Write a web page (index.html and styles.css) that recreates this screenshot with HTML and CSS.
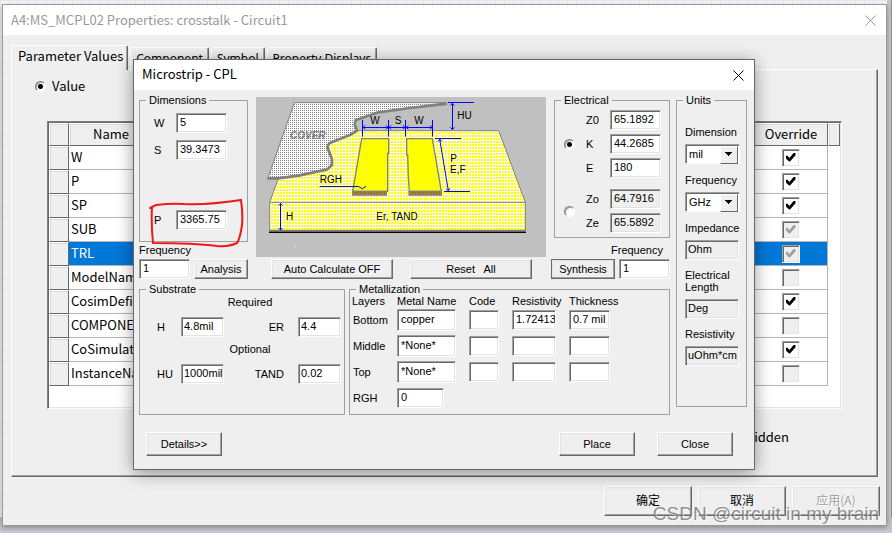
FILE: index.html
```html
<!DOCTYPE html>
<html lang="en">
<head>
<meta charset="utf-8">
<title>Microstrip - CPL</title>
<link rel="stylesheet" href="styles.css">
</head>
<body>
<div class="desktop">
  <section class="window">
    <header class="titlebar titlebar-idle">
      <h1>A4:MS_MCPL02 Properties: crosstalk - Circuit1</h1>
      <button class="close" aria-label="Close properties"><svg viewBox="0 0 11 11"><path d="M0.5 0.5 10.5 10.5M10.5 0.5 0.5 10.5"/></svg></button>
    </header>
    <div class="tabs" role="tablist">
      <button class="tab tab-on" role="tab">Parameter Values</button>
      <button class="tab" role="tab">Component</button>
      <button class="tab" role="tab">Symbol</button>
      <button class="tab" role="tab">Property Displays</button>
    </div>
    <div class="panel">
      <label class="mode"><input type="radio" name="mode" checked>Value</label>
      <div class="listbox">
        <table class="params">
          <colgroup><col class="c-handle"><col><col class="c-check"><col class="c-end"></colgroup>
          <thead><tr><th></th><th class="h-name">Name</th><th>Override</th><th></th></tr></thead>
          <tbody>
            <tr><th></th><td>W</td><td><input type="checkbox" aria-label="Override W" checked></td><td></td></tr>
            <tr><th></th><td>P</td><td><input type="checkbox" aria-label="Override P" checked></td><td></td></tr>
            <tr><th></th><td>SP</td><td><input type="checkbox" aria-label="Override SP" checked></td><td></td></tr>
            <tr><th></th><td>SUB</td><td><input type="checkbox" aria-label="Override SUB" checked disabled></td><td></td></tr>
            <tr class="selected"><th></th><td>TRL</td><td><input type="checkbox" aria-label="Override TRL" checked disabled></td><td></td></tr>
            <tr><th></th><td>ModelName</td><td><input type="checkbox" aria-label="Override ModelName" disabled></td><td></td></tr>
            <tr><th></th><td>CosimDefinition</td><td><input type="checkbox" aria-label="Override CosimDefinition" checked></td><td></td></tr>
            <tr><th></th><td>COMPONENT</td><td><input type="checkbox" aria-label="Override COMPONENT" disabled></td><td></td></tr>
            <tr><th></th><td>CoSimulator</td><td><input type="checkbox" aria-label="Override CoSimulator" checked></td><td></td></tr>
            <tr><th></th><td>InstanceName</td><td><input type="checkbox" aria-label="Override InstanceName" disabled></td><td></td></tr>
          </tbody>
        </table>
      </div>
      <p class="hidden-note">Hidden</p>
    </div>
    <footer class="actions">
      <button class="btn">确定</button>
      <button class="btn">取消</button>
      <button class="btn" disabled>应用(A)</button>
    </footer>
  </section>

  <section class="dialog">
    <header class="titlebar">
      <h2>Microstrip - CPL</h2>
      <button class="close" aria-label="Close dialog"><svg viewBox="0 0 11 11"><path d="M0.5 0.5 10.5 10.5M10.5 0.5 0.5 10.5"/></svg></button>
    </header>
    <div class="body">
      <div class="work">
        <div class="upper">
          <div class="col-dim">
            <fieldset class="dims">
              <legend>Dimensions</legend>
              <label for="w">W</label><input id="w" type="text" value="5">
              <label for="s">S</label><input id="s" type="text" value="39.3473">
              <label for="p">P</label><input id="p" type="text" value="3365.75">
            </fieldset>
            <label class="freq-label" for="fa">Frequency</label>
            <div class="pair"><input id="fa" type="text" value="1"><button class="btn">Analysis</button></div>
          </div>
          <div class="col-pic">
            <svg class="drawing" viewBox="18 21 870 480" role="img" aria-label="Coupled line cross section">
              <defs>
                <pattern id="sub" width="9" height="9" patternUnits="userSpaceOnUse"><rect width="9" height="9" fill="#fff"/><path fill="#ff0" d="M0 0h6v6h-6z" shape-rendering="crispEdges"/></pattern>
                <pattern id="cov" width="6" height="6" patternUnits="userSpaceOnUse"><rect width="6" height="6" fill="#fff"/><path fill="#808080" d="M0 0h3v3h-3z" shape-rendering="crispEdges"/></pattern>
              </defs>
              <rect x="18" y="21" width="870" height="480" fill="#c0c0c0"/>
              <path d="M150 122H746L826 337V424H59V337L85 265Z" fill="url(#sub)" stroke="#808080" stroke-width="3"/>
              <path d="M59 337H826" stroke="#808080" stroke-width="3"/>
              <path d="M58 422H827" stroke="#808080" stroke-width="5"/><path d="M57 427H828" stroke="#000" stroke-width="4"/>
              <path d="M133 38H590V44L480 54L385 67L314 92L319 119L299 134L238 160L232 178L246 210V227L232 238L85 266H53Z" fill="url(#cov)" stroke="#808080" stroke-width="3"/>
              <path d="M588 41 480 54 385 67 316 91 314 104 321 122 300 135 238 160 232 170 246 208V225L232 238 150 256 85 265H53" fill="none" stroke="#808080" stroke-width="8" stroke-linejoin="round"/>
              <path d="M335 146H416V190H413V304H308Z M470 146H547L574 304H478L475 262L473 195H470Z" fill="#ff0" stroke="#808080" stroke-width="4"/>
              <path d="M306 310H411M475 310H576" stroke="#808080" stroke-width="15"/>
              <path d="M310 310H408M479 310H573" stroke="#800000" stroke-width="3"/><path d="M310 310H408M479 310H573" stroke="#ff0" stroke-width="3" stroke-dasharray="3 3"/>
              <g fill="none" stroke="#00f" stroke-width="3">
                <path d="M337.500 90V140M415.500 90V140M466.500 90V140M547.500 90V140M337 112.500H548M345 106 339 112 345 118M408 106 414 112 408 118M423 106 417 112 423 118M459 106 465 112 459 118M475 106 469 112 475 118M540 106 546 112 540 118"/>
                <path d="M594 37.500H672M607.500 38V120M601 46 607 40 613 46M601 112 607 118 613 112M555 145.500H633M582 304.500H660M569 147 595 302M564 155 569 148 576 154M589 297 595 302 600 295M91.500 340V420M86 347 92 341 98 347M86 414 92 420 98 414M209 289.500H325L337 296 348 289"/>
              </g>
              <g class="draw-text">
                <text x="361" y="101">W</text><text x="434" y="101">S</text><text x="493" y="101">W</text><text x="622" y="88">HU</text>
                <text x="601" y="215">P</text><text x="600" y="249">E,F</text><text x="209" y="278">RGH</text><text x="108" y="389">H</text><text x="379" y="389">Er, TAND</text>
                <text class="cover" x="120" y="148">COVER</text>
              </g>
              <rect x="135" y="468" width="3" height="3" fill="#fff"/>
            </svg>
            <div class="pic-actions"><button class="btn">Auto Calculate OFF</button><button class="btn">Reset&nbsp;&nbsp; All</button></div>
          </div>
          <div class="col-el">
            <fieldset class="elec">
              <legend>Electrical</legend>
              <div class="elec-set">
                <input type="radio" name="el" aria-label="Z0, K, E" checked>
                <div class="rows">
                  <label for="z0">Z0</label><input id="z0" type="text" value="65.1892">
                  <label for="k">K</label><input id="k" type="text" value="44.2685">
                  <label for="e">E</label><input id="e" type="text" value="180">
                </div>
              </div>
              <div class="elec-set">
                <input type="radio" name="el" aria-label="Zo, Ze">
                <div class="rows">
                  <label for="zo">Zo</label><input id="zo" type="text" value="64.7916" readonly>
                  <label for="ze">Ze</label><input id="ze" type="text" value="65.5892" readonly>
                </div>
              </div>
            </fieldset>
            <label class="freq-label freq-right" for="fs">Frequency</label>
            <div class="pair"><button class="btn btn-default">Synthesis</button><input id="fs" type="text" value="1"></div>
          </div>
        </div>
        <div class="lower">
          <fieldset class="substrate">
            <legend>Substrate</legend>
            <p>Required</p>
            <div class="sub-row"><label for="h">H</label><input id="h" type="text" value="4.8mil"><label for="er">ER</label><input id="er" type="text" value="4.4"></div>
            <p>Optional</p>
            <div class="sub-row"><label for="hu">HU</label><input id="hu" type="text" value="1000mil"><label for="tand">TAND</label><input id="tand" type="text" value="0.02"></div>
          </fieldset>
          <fieldset class="metal">
            <legend>Metallization</legend>
            <table>
              <thead><tr><th>Layers</th><th>Metal Name</th><th>Code</th><th>Resistivity</th><th>Thickness</th></tr></thead>
              <tbody>
                <tr><th>Bottom</th><td><input class="m-name" type="text" aria-label="Bottom metal" value="copper"></td><td><input class="m-code" type="text" aria-label="Bottom code"></td><td><input class="m-res" type="text" aria-label="Bottom resistivity" value="1.72413"></td><td><input class="m-thick" type="text" aria-label="Bottom thickness" value="0.7 mil"></td></tr>
                <tr><th>Middle</th><td><input class="m-name" type="text" aria-label="Middle metal" value="*None*"></td><td><input class="m-code" type="text" aria-label="Middle code"></td><td><input class="m-res" type="text" aria-label="Middle resistivity"></td><td><input class="m-thick" type="text" aria-label="Middle thickness"></td></tr>
                <tr><th>Top</th><td><input class="m-name" type="text" aria-label="Top metal" value="*None*"></td><td><input class="m-code" type="text" aria-label="Top code"></td><td><input class="m-res" type="text" aria-label="Top resistivity"></td><td><input class="m-thick" type="text" aria-label="Top thickness"></td></tr>
                <tr><th>RGH</th><td><input class="m-rgh" type="text" aria-label="RGH" value="0"></td><td></td><td></td><td></td></tr>
              </tbody>
            </table>
          </fieldset>
        </div>
      </div>
      <fieldset class="units">
        <legend>Units</legend>
        <label for="ud">Dimension</label><span class="drop"><select id="ud"><option>mil</option></select></span>
        <label for="uf">Frequency</label><span class="drop"><select id="uf"><option>GHz</option></select></span>
        <label for="ui">Impedance</label><input id="ui" type="text" value="Ohm" readonly>
        <label for="ue">Electrical<br>Length</label><input id="ue" type="text" value="Deg" readonly>
        <label for="ur">Resistivity</label><input id="ur" type="text" value="uOhm*cm" readonly>
      </fieldset>
    </div>
    <footer class="dialog-actions">
      <button class="btn">Details&gt;&gt;</button>
      <button class="btn push">Place</button>
      <button class="btn">Close</button>
    </footer>
    <svg class="markup" viewBox="0 0 96 50" aria-hidden="true"><path d="M1 9 7 6Q24 4 35 5Q60 6 92 1Q94 15 93 26Q91 40 88 44Q80 48 68 47Q45 44 4 44Q2 24 3 8"/></svg>
  </section>
  <div class="watermark">CSDN @circuit in my brain</div>
</div>
</body>
</html>
```
FILE: styles.css
```css
* { box-sizing: border-box; }
body { margin: 0; }
button, input, select { font: inherit; color: inherit; margin: 0; }
h1, h2, p { margin: 0; font-weight: normal; }

.desktop {
  position: relative;
  min-height: 100vh;
  padding: 4px 5px 7px 2px;
  overflow: hidden;
  font: 13px/16px "Noto Sans CJK SC", "Noto Sans", sans-serif;
  color: #000;
  background:
    linear-gradient(#b9bec6, #c9ccd2) bottom / 100% 16px no-repeat,
    linear-gradient(90deg, #c4c4c4 0 4px, #8c8c8c 4px 5px) right / 5px 100% no-repeat,
    repeating-linear-gradient(90deg, #e4e4f4 0 1px, transparent 1px 9px),
    repeating-linear-gradient(#e4e4f4 0 1px, transparent 1px 9px),
    #f7f7f7;
}
.window {
  display: flex;
  flex-direction: column;
  min-height: calc(100vh - 11px);
  border: 1px solid #999;
  background: #efefef;
  box-shadow: 0 2px 5px rgba(0, 0, 0, .3);
}
.titlebar {
  display: flex;
  align-items: center;
  justify-content: space-between;
  height: 30px;
  padding: 0 10px 0 8px;
  background: #fff;
}
.titlebar h1, .titlebar h2 { font-size: 13px; }
.titlebar h2 { padding-bottom: 2px; }
.titlebar-idle { color: #999; }
.close { width: 11px; height: 11px; padding: 0; border: 0; background: none; display: flex; }
.close svg { width: 11px; height: 11px; fill: none; stroke: currentColor; }

.tabs {
  display: flex;
  align-items: flex-end;
  gap: 2px;
  margin: 10px 8px 0;
  height: 24px;
  font: 12px/16px "Noto Sans", sans-serif;
}
.tab {
  height: 22px;
  padding: 1px 5px;
  border: 1px solid;
  border-color: #fff #696969 transparent #fff;
  border-bottom: 0;
  border-radius: 2px 2px 0 0;
  background: #efefef;
  box-shadow: inset -1px 0 #a0a0a0;
}
.tab-on {
  position: relative;
  height: 25px;
  margin-bottom: -1px;
  padding: 0 4px 4px 6px;
  font: 13px/16px "Noto Sans CJK SC", "Noto Sans", sans-serif;
}
.panel {
  flex: 1;
  margin: 0 8px;
  padding: 8px 35px 0 35px;
  border: 1px solid;
  border-color: #fff #696969 #696969 #fff;
  box-shadow: inset -1px -1px #a0a0a0;
}
.mode { display: flex; align-items: center; gap: 6px; margin-left: -12px; height: 16px; }
input[type="radio"] {
  appearance: none;
  width: 11px;
  height: 11px;
  border: 1px solid;
  border-color: #808080 #fff #fff #808080;
  border-radius: 50%;
  background: #fff;
  box-shadow: inset 1px 1px #a0a0a0;
}
input[type="radio"]:checked { background: radial-gradient(circle, #000 0 2px, #fff 3px); }

.listbox {
  height: 288px;
  margin-top: 27px;
  border: 1px solid;
  border-color: #808080 #fff #fff #808080;
  background: #fff;
  box-shadow: inset 1px 1px #696969, inset -1px -1px #e3e3e3;
  padding: 1px;
}
.params { width: 100%; border-collapse: separate; border-spacing: 0; table-layout: fixed; text-align: left; }
.c-handle { width: 20px; }
.c-check { width: 74px; }
.c-end { width: 12px; }
.params th {
  padding: 0;
  background: #efefef;
  border: 1px solid;
  border-color: #fff #696969 #696969 #fff;
  box-shadow: inset 1px 1px #dcdcdc;
  font-weight: normal;
}
.params thead th { height: 23px; padding-bottom: 2px; text-align: center; }
.params thead .h-name { text-align: left; padding-left: 23px; }
.params td { height: 24px; padding: 0 2px 2px; border-bottom: 1px solid #b4b4b4; line-height: 16px; }
.params td:nth-child(3) { border-right: 1px solid #b4b4b4; padding-bottom: 0; }
.params td:last-child { border: 0; }
.selected td { background: #0078d7; color: #fff; }
.selected td:last-child { background: none; }
.params input {
  display: block;
  appearance: none;
  width: 18px;
  height: 18px;
  margin: 0 auto;
  border: 1px solid;
  border-color: #a0a0a0 #fff #fff #a0a0a0;
  background: #fff;
  box-shadow: inset 1px 1px #696969, inset -1px -1px #e3e3e3;
}
.params input:disabled { background: #efefef; }
.params input:checked::before {
  content: "";
  display: block;
  width: 10px;
  height: 9px;
  margin: 3px;
  background: #000;
  clip-path: polygon(0 35%, 20% 35%, 40% 60%, 80% 5%, 100% 0, 100% 30%, 45% 100%, 35% 100%, 0 60%);
}
.params input:checked:disabled::before { background: #a0a0a0; }
.hidden-note { margin-top: 20px; padding-right: 53px; text-align: right; }
.actions { display: flex; justify-content: flex-end; gap: 6px; padding: 9px 6px 9px; }
.btn {
  padding: 0;
  border: 1px solid;
  border-color: #fff #696969 #696969 #fff;
  background: #efefef;
  box-shadow: inset -1px -1px #a0a0a0, inset 1px 1px #e3e3e3;
}
.actions .btn { width: 88px; height: 30px; padding-bottom: 2px; font-size: 12px; }
.actions .btn:disabled { color: #a0a0a0; text-shadow: 1px 1px #fff; }

.dialog {
  position: absolute;
  left: 133px;
  top: 59px;
  width: 622px;
  border: 1px solid #666;
  background: #efefef;
  box-shadow: 0 3px 16px rgba(0, 0, 0, .4);
}
.body { display: flex; gap: 6px; padding: 4px 7px 0 5px; font: 11px/12px "Liberation Sans", sans-serif; }
.work { flex: 1; }
.upper { display: flex; height: 189px; }
fieldset { margin: 0; min-width: 0; padding: 0; border: 1px solid #a0a0a0; }
legend { margin-left: 6px; padding: 0 3px; line-height: 12px; }
.body input[type="text"] {
  width: 51px;
  height: 20px;
  padding: 0 0 2px 3px;
  border: 1px solid;
  border-color: #a0a0a0 #fff #fff #a0a0a0;
  background: #fff;
  box-shadow: inset 1px 1px #696969, inset -1px -1px #e3e3e3;
}
.body input[type="text"]:read-only { background: #efefef; }
.col-dim { width: 109px; }
.dims { display: grid; grid-template-columns: 22px 51px; grid-template-rows: 27px 70px 20px; height: 148px; padding: 7px 0 0 14px; }
.dims legend { margin-left: -8px; }
.dims label { line-height: 20px; }
.freq-label { display: block; height: 17px; line-height: 17px; }
.pair { display: flex; gap: 4px; height: 20px; }
.pair .btn { flex: 1; }
.col-pic { width: 290px; margin-left: 8px; padding-top: 3px; }
.drawing { display: block; width: 290px; height: 160px; }
.draw-text { font: 30px "Liberation Sans", sans-serif; }
.draw-text .cover { font-weight: bold; font-style: italic; fill: #808080; }
.pic-actions { display: flex; gap: 17px; padding: 2px 14px 0 15px; }
.pic-actions .btn { flex: 1; height: 20px; }
.col-el { width: 119px; margin-left: auto; }
.elec { height: 144px; margin: 0 0 0 3px; }
.elec-set { display: flex; align-items: center; gap: 11px; padding: 4px 0 0 9px; }
.elec-set + .elec-set { padding-top: 11px; }
.rows { display: grid; grid-template-columns: 24px 51px; gap: 4px 0; align-items: center; }
.freq-right { margin-left: 60px; margin-top: 4px; }
.btn-default { outline: 1px solid #696969; outline-offset: -1px; }
.lower { display: flex; gap: 4px; }
.substrate { width: 206px; height: 132px; padding-top: 1px; }
.substrate p { height: 14px; text-align: center; padding-left: 16px; }
.sub-row { display: grid; grid-template-columns: 24px 43px 74px 43px; height: 33px; align-items: center; padding-left: 17px; }
.sub-row label:nth-of-type(2) { text-align: right; padding-right: 14px; }
.body .sub-row input[type="text"] { width: 43px; padding-left: 2px; }
.metal { flex: 1; height: 132px; }
.metal table { width: 100%; border-collapse: collapse; table-layout: fixed; }
.metal th { padding: 0 0 0 3px; font-weight: normal; text-align: left; }
.metal thead th { height: 12px; }
.metal td { padding: 0; height: 26px; }
.metal thead th:nth-child(1) { width: 47px; padding-left: 2px; }
.metal thead th:nth-child(2) { width: 72px; padding: 0; }
.metal thead th:nth-child(3) { width: 43px; padding: 0; }
.metal thead th:nth-child(4) { width: 57px; padding: 0; }
.metal thead th:nth-child(5) { padding: 0; }
.metal input { display: block; }
.body .m-name[type="text"] { width: 59px; height: 22px; }
.body .m-code[type="text"] { width: 30px; }
.body .m-res[type="text"] { width: 44px; }
.body .m-thick[type="text"] { width: 41px; }
.body .m-rgh[type="text"] { width: 47px; }
.units { width: 71px; height: 313px; padding: 20px 0 0 8px; }
.units legend { margin-left: -2px; }
.units label { display: block; padding-bottom: 6px; }
.body .units input[type="text"] { display: block; width: 54px; margin-bottom: 9px; padding-left: 2px; }
.drop {
  display: block;
  position: relative;
  width: 55px;
  height: 20px;
  margin-bottom: 10px;
  border: 1px solid;
  border-color: #a0a0a0 #fff #fff #a0a0a0;
  box-shadow: inset 1px 1px #696969;
  background: #fff;
}
.drop select { width: 100%; height: 18px; padding: 0 0 0 3px; border: 0; background: none; appearance: none; }
.drop::after {
  content: "";
  position: absolute;
  right: 1px;
  top: 1px;
  width: 16px;
  height: 16px;
  border: 1px solid;
  border-color: #fff #696969 #696969 #fff;
  background: linear-gradient(#000, #000) 4px 5px / 7px 1px no-repeat, linear-gradient(#000, #000) 5px 6px / 5px 1px no-repeat, linear-gradient(#000, #000) 6px 7px / 3px 1px no-repeat, linear-gradient(#000, #000) 7px 8px / 1px 1px no-repeat, #efefef;
  pointer-events: none;
}
.dialog-actions { display: flex; gap: 22px; padding: 17px 21px 13px 12px; font: 11px/12px "Liberation Sans", sans-serif; }
.dialog-actions .btn { width: 76px; height: 24px; }
.push { margin-left: auto; }
.markup { position: absolute; left: 15px; top: 139px; width: 96px; height: 50px; fill: none; stroke: #f01818; stroke-width: 2; stroke-linecap: round; }
.watermark {
  position: absolute;
  right: 13px;
  bottom: 8px;
  font: 19px/22px "Liberation Sans", sans-serif;
  color: rgba(110, 110, 110, .75);
  text-shadow: 1px 1px rgba(255, 255, 255, .6);
}
```
